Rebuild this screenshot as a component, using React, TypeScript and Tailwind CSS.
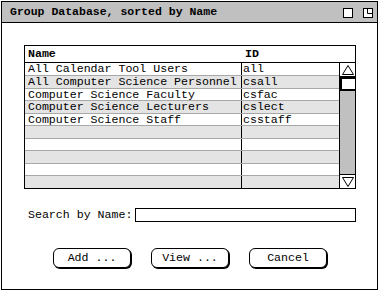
import React from "react";

const mono = { fontFamily: '"Liberation Mono", "DejaVu Sans Mono", monospace' };

const rows = [
  ["All Calendar Tool Users", "all"],
  ["All Computer Science Personnel", "csall"],
  ["Computer Science Faculty", "csfac"],
  ["Computer Science Lecturers", "cslect"],
  ["Computer Science Staff", "csstaff"],
  ["", ""],
  ["", ""],
  ["", ""],
  ["", ""],
  ["", ""],
];

const heights = ["h-[12px]", "h-[13px]", "h-[12px]", "h-[13px]", "h-[12px]", "h-[13px]", "h-[12px]", "h-[13px]", "h-[12px]", "h-[13px]"];

function Btn({ label }: { label: string }) {
  return (
    <div className="w-[78px] h-[20px] border border-black rounded-[6px] bg-white shadow-[1px_1px_0_0_#000] flex items-center justify-center text-[11.6px] text-black leading-none">
      {label}
    </div>
  );
}

export default function App() {
  return (
    <div className="w-[379px] h-[291px] bg-white" style={mono}>
      <div className="ml-[1px] mt-[1px] w-[377px] h-[289px] border border-black flex flex-col bg-white">
        <div className="h-[21px] bg-[#c0c0c0] border-b border-black flex items-center pl-[8px] pr-[4px]">
          <span className="text-[11.5px] font-bold text-black leading-none">Group Database, sorted by Name</span>
          <div className="ml-auto flex items-center gap-[10px] mt-[1px]">
            <div className="w-[10px] h-[10px] border border-black bg-white" />
            <svg width="10" height="10" viewBox="0 0 10 10" className="block">
              <rect x="0.5" y="0.5" width="9" height="9" fill="white" stroke="black" />
              <path d="M4.5 0.5 V5.5 H9.5" fill="none" stroke="black" />
            </svg>
          </div>
        </div>
        <div className="flex flex-col pl-[22px] pt-[22px]">
          <div className="w-[332px] h-[144px] border border-black flex flex-col">
            <div className="h-[17px] border-b border-black flex items-center text-[11.6px] font-bold text-black leading-none">
              <div className="w-[216px] pl-[3px]">Name</div>
              <div className="pl-[4px]">ID</div>
            </div>
            <div className="flex flex-1">
              <div className="flex flex-col w-[314px]">
                {rows.map((r, i) => (
                  <div
                    key={i}
                    className={`${heights[i]} flex text-[11.6px] text-black leading-none ${i > 0 ? "border-t border-[#a8a8a8]" : ""} ${i % 2 === 1 ? "bg-[#e4e4e4]" : "bg-white"}`}
                  >
                    <div className="w-[216px] pl-[3px] flex items-center whitespace-nowrap overflow-hidden">{r[0]}</div>
                    <div className="w-[98px] border-l border-black pl-[1px] flex items-center whitespace-nowrap">{r[1]}</div>
                  </div>
                ))}
              </div>
              <div className="w-[16px] border-l border-black flex flex-col">
                <div className="h-[14px] border-b border-black bg-white flex items-center justify-center">
                  <svg width="12" height="10" viewBox="0 0 12 10">
                    <path d="M6 0.5 L11.5 9.5 H0.5 Z" fill="none" stroke="black" />
                  </svg>
                </div>
                <div className="h-[14px] border-2 border-black bg-white border-r-0" />
                <div className="flex-1 bg-[#c0c0c0]" />
                <div className="h-[14px] border-t border-black bg-white flex items-center justify-center">
                  <svg width="12" height="10" viewBox="0 0 12 10">
                    <path d="M6 9.5 L11.5 0.5 H0.5 Z" fill="none" stroke="black" />
                  </svg>
                </div>
              </div>
            </div>
          </div>
          <div className="mt-[19px] flex items-center">
            <span className="w-[111px] pl-[4px] text-[11.6px] text-black leading-none whitespace-nowrap">Search by Name:</span>
            <div className="w-[221px] h-[14px] border border-black bg-white" />
          </div>
          <div className="mt-[26px] flex pl-[29px] gap-[20px]">
            <Btn label="Add ..." />
            <Btn label="View ..." />
            <Btn label="Cancel" />
          </div>
        </div>
      </div>
    </div>
  );
}
